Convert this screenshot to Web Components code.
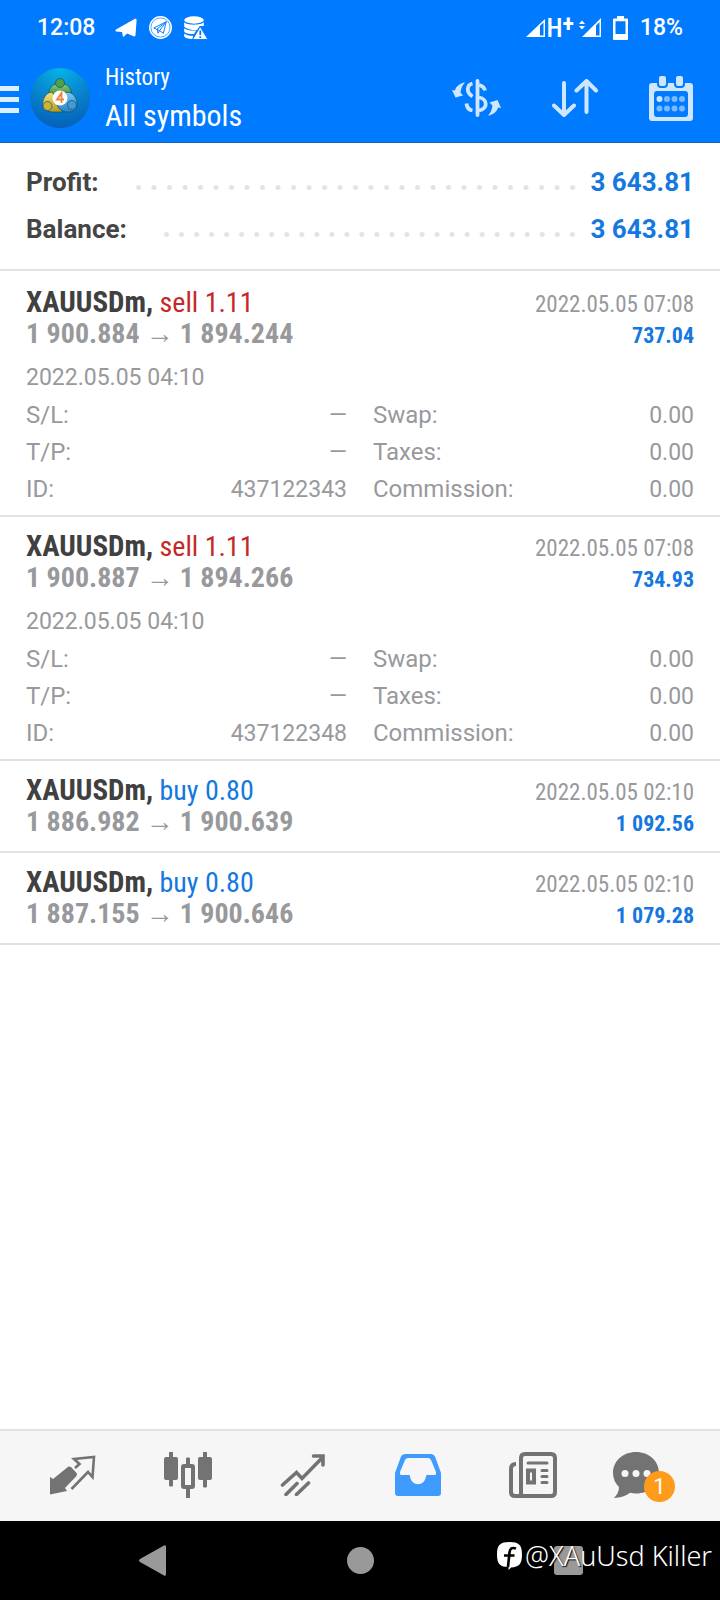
<!DOCTYPE html>
<html lang="en">
<head>
<meta charset="utf-8">
<meta name="viewport" content="width=device-width, initial-scale=1">
<title>History – All symbols</title>
<style>
  html, body { margin: 0; }
  body { background: #fff; font-family: Roboto, "Liberation Sans", sans-serif; }
</style>
</head>
<body>
<history-app></history-app>

<script>
const define = (name, html, setup) => {
  const template = document.createElement('template');
  template.innerHTML = html;
  customElements.define(name, class extends HTMLElement {
    constructor() {
      super();
      this.attachShadow({ mode: 'open' }).append(template.content.cloneNode(true));
    }
    connectedCallback() {
      if (setup) setup(this, this.shadowRoot);
    }
  });
};

const CONDENSED = '"Roboto Condensed", Roboto, "Liberation Sans Narrow", sans-serif';

define('status-bar', `
<style>
  :host { box-sizing: border-box; display: flex; align-items: center; height: 54px; padding: 1px 37px 0; color: #fff; font-size: 23px; font-weight: 500; line-height: 28px; }
  .left, .right { display: flex; align-items: center; }
  .left { gap: 12px; flex: 1; }
  .left time { margin-right: 8px; }
  .right { gap: 12px; }
  .net { display: flex; align-items: center; font-family: ${CONDENSED}; font-size: 26px; font-weight: 500; }
  .net span { margin-left: 1px; }
  .net sup { line-height: 0; font-size: 24px; vertical-align: 5px; font-weight: 700; }
  .net span + svg { margin-left: 5px; }
  svg { display: block; }
</style>
<div class="left">
  <time>12:08</time>
  <svg width="22" height="20" viewBox="0 0 22 20" fill="#fff"><path d="M.5 13Q0 12 1 11.500L20 .8q1.800-.5 1.600 1.400L20.500 17q-.2 2-2 1.300L12 15.500 9 18.500q-1 .7-1.200-.5L7 14 1 13.500zM8.500 13.200 17 6 9.800 14.200z"/></svg>
  <svg width="23" height="23" viewBox="0 0 24 24"><circle cx="12" cy="12" r="11.200" fill="#fff" stroke="#fff" stroke-width="1.500"/><circle cx="12" cy="12" r="10" fill="none" stroke="#007aff" stroke-width=".7"/><path d="M5 12.500 18 6 15 18 11 15.300zM8.500 13.500 18 6M18 6 11 15.300 9.500 18 8.500 13.500" fill="none" stroke="#007aff" stroke-width="1" stroke-linejoin="round"/></svg>
  <svg width="24" height="24" viewBox="0 0 24 24" fill="#fff"><ellipse cx="10" cy="4" rx="9.800" ry="3.700"/><path d="M.2 6.300c2.500 3.200 17 3.200 19.600 0v3.700L16 10 13 14C8 14.500 2 13 .2 10.500zM.2 12.300c2.500 2 7 2.600 12 2.200L10 18C5 18 1.500 17.500.2 15.500zM.2 17.500c2 1.800 5 2.300 9 2.300L8.500 23C4 23 1 22 .2 20.500z"/><path d="M16.200 10.500 24 23.600H8.500z" stroke="#007aff" stroke-width="1"/><path d="M15.400 14.500h1.800v4.500h-1.800zM15.400 20.300h1.800v1.800h-1.800z" fill="#007aff"/></svg>
</div>
<div class="right">
  <div class="net">
    <svg width="19" height="18" viewBox="0 0 19 18" fill="#fff"><path fill-rule="evenodd" d="M0 18 19 0v18zM14 6.800V16.500h3.500V3.500z"/></svg>
    <span>H<sup>+</sup></span>
    <svg width="22" height="19" viewBox="0 0 22 19" fill="#fff"><path d="M0 6 3 2.500 6 6zM0 8h6L3 11.500z"/><path fill-rule="evenodd" d="M3 19 22 0v19zM17 7.500V17.500h3.500V4z"/></svg>
  </div>
  <svg width="15" height="24" viewBox="0 0 15 24"><path fill="#fff" fill-rule="evenodd" d="M4 0h7v2.500h3q1 0 1 1V23q0 1-1 1H1q-1 0-1-1V3.500q0-1 1-1h3zM2.500 5.200V18h10V5.200z"/></svg>
  <span>18%</span>
</div>`);

define('app-header', `
<style>
  :host { display: block; background: #007aff; border-bottom: 1px solid #1763b8; color: #fff; }
  .bar { display: flex; align-items: center; height: 88px; padding-right: 27px; }
  button { all: unset; display: block; cursor: pointer; }
  svg { display: block; }
  .menu { width: 19px; margin-right: 11px; padding-top: 4px; }
  .title { flex: 1; padding: 4px 0 0 15px; font-family: ${CONDENSED}; }
  .title p, .title h1 { margin: 0; font-weight: 400; }
  .title p { font-size: 23px; line-height: 32px; }
  .title h1 { font-size: 30px; line-height: 44px; }
  .actions { display: flex; align-items: center; gap: 51px; }
</style>
<status-bar></status-bar>
<div class="bar">
  <button class="menu" aria-label="Menu"><svg width="19" height="28" viewBox="0 0 19 28" fill="#dcefff"><path d="M0 0h19v5H0zM0 11h19v5H0zM0 22h19v5H0z"/></svg></button>
  <svg width="60" height="60" viewBox="0 0 60 60">
    <defs>
      <radialGradient id="sky" cx=".5" cy="0" r="1"><stop offset="0" stop-color="#05b5e6"/><stop offset=".5" stop-color="#0887d0"/><stop offset="1" stop-color="#0660b8"/></radialGradient>
      <linearGradient id="g" x2="0" y2="1"><stop offset="0" stop-color="#8fca77"/><stop offset="1" stop-color="#2f8a3a"/></linearGradient>
      <linearGradient id="y" x2="0" y2="1"><stop offset="0" stop-color="#f2e37a"/><stop offset="1" stop-color="#b89a1c"/></linearGradient>
      <linearGradient id="b" x2="0" y2="1"><stop offset="0" stop-color="#7cc8f2"/><stop offset="1" stop-color="#2782c8"/></linearGradient>
    </defs>
    <circle cx="30" cy="30" r="30" fill="url(#sky)"/>
    <g stroke="#12506e" stroke-width=".7">
      <path d="M18.500 27q0-11.500 11.500-11.500T41.500 27q-3 2-7 1h-9q-4 3-7-1z" fill="url(#g)"/>
      <circle cx="30" cy="15" r="4.500" fill="#4fa04a"/>
      <path d="M22 24q-8 1-9.500 11-.5 8 9.500 9h11q-5-4-6-12z" fill="url(#y)"/>
      <circle cx="17.500" cy="38" r="4.500" fill="#cbb236"/>
      <path d="M36 24q9 0 11 10 1 9-7 10-10 1-13-7l6-2z" fill="url(#b)"/>
      <circle cx="42" cy="37" r="4.500" fill="#4199d6"/>
    </g>
    <circle cx="30" cy="30" r="7.500" fill="#fff"/>
    <path d="M31.500 35V25L27 31.500h7" fill="none" stroke="#f0843c" stroke-width="1.800"/>
  </svg>
  <div class="title"><p>History</p><h1>All symbols</h1></div>
  <div class="actions">
    <button aria-label="Symbols"><svg width="49" height="40" viewBox="0 0 49 40" fill="none" stroke="#cfe6ff" stroke-width="3.800">
      <path d="M25.500 3v34" stroke-linecap="round"/><path d="M20.500 5.500C14.500 7 14 14.500 20.500 18.500M14.500 25.500q.5 6 6 7M27 7c4 1 5.500 3 6 5.500M27 19.500C36 21 36 31 27 32.500"/>
      <g fill="#cfe6ff" stroke="none"><path d="M13 4.500C8 5 3.500 9 3 12.500L0 12l3.500 7.500L11 17.500 8.500 14.500C9 10 10.500 7 13 4.500z"/><path d="M36 37.500C41 37 45.500 33 46 29.500L49 30 45.500 22 37.500 24.500 40.500 27.500C40 32 38.500 35 36 37.500z"/></g></svg></button>
    <button aria-label="Sort"><svg width="46" height="40" viewBox="0 0 46 40" fill="none" stroke="#cfe6ff" stroke-width="4" stroke-linecap="round" stroke-linejoin="round"><path d="M12 5v32M2 27.500 12 37 22 27.500M34.500 34V3M24.500 12.500 34.500 3 44 12.500"/></svg></button>
    <button aria-label="Period"><svg width="44" height="46" viewBox="0 0 44 46"><path fill="#cfe6ff" fill-rule="evenodd" d="M3 8h38q3 0 3 3v32q0 3-3 3H3q-3 0-3-3V11q0-3 3-3zM8 16q-3 0-3 3v20q0 3 3 3h28q3 0 3-3V19q0-3-3-3z"/><g fill="#cfe6ff" stroke="#007aff" stroke-width="2"><rect x="9" y="0" width="9" height="12" rx="3"/><rect x="26" y="0" width="9" height="12" rx="3"/></g><circle cx="10.500" cy="24" r="3" fill="#cfe6ff"/><g fill="#7bb9ff"><circle cx="18" cy="24" r="3"/><circle cx="25.500" cy="24" r="3"/><circle cx="33" cy="24" r="3"/><circle cx="10.500" cy="33.500" r="3"/><circle cx="18" cy="33.500" r="3"/><circle cx="25.500" cy="33.500" r="3"/><circle cx="33" cy="33.500" r="3"/></g></svg></button>
  </div>
</div>`);

define('summary-line', `
<style>
  :host { display: flex; align-items: center; font-size: 26px; line-height: 47px; font-weight: 700; color: #454545; }
  i { flex: 1; height: 5px; margin: 10px 10px 0 32px; background: radial-gradient(circle at center, #e3e3e3 2px, transparent 3px) 0 0 / 15px 5px space no-repeat; }
  .value { color: #1478e0; }
</style>
<slot></slot><i></i><span class="value"><slot name="value"></slot></span>`);

define('deal-row', `
<style>
  :host { display: block; padding: 13px 26px 0; border-bottom: 2px solid #e3e3e3; color: #98999c; }
  .line { display: flex; align-items: baseline; justify-content: space-between; height: 32px; font-family: ${CONDENSED}; font-size: 28px; line-height: 32px; }
  .head { padding-bottom: 13px; }
  b { color: #404040; font-size: 29px; }
  .side { color: #c62828; }
  :host([side="buy"]) .side { color: #1478e0; }
  .price { font-weight: 700; }
  .arrow { font-family: "Liberation Sans", sans-serif; font-size: 28px; font-weight: 400; line-height: 0; padding: 0 6px; }
  .date, .profit { line-height: 28px; }
  .date { font-size: 23px; }
  .profit { font-size: 22px; font-weight: 700; color: #1478e0; }
  .details { display: none; font-size: 23px; line-height: 38px; padding-bottom: 7px; }
  :host([open]) .head { padding-bottom: 9px; }
  :host([open]) .details { display: block; }
  .opened { display: block; }
  dl { display: grid; grid-template-columns: 1fr 1fr; column-gap: 26px; margin: 0; line-height: 37px; }
  dl div { display: flex; align-items: baseline; justify-content: space-between; height: 37px; }
  dt { font-size: 24px; }
  dd { margin: 0; }
</style>
<div class="head">
  <div class="line"><span><b class="symbol"></b> <span class="side"></span></span><time class="date"></time></div>
  <div class="line"><span class="price"><span class="from"></span><span class="arrow">→</span><span class="to"></span></span><span class="profit"></span></div>
</div>
<div class="details">
  <time class="opened"></time>
  <dl>
    <div><dt>S/L:</dt><dd>—</dd></div><div><dt>Swap:</dt><dd>0.00</dd></div>
    <div><dt>T/P:</dt><dd>—</dd></div><div><dt>Taxes:</dt><dd>0.00</dd></div>
    <div><dt>ID:</dt><dd class="ticket"></dd></div><div><dt>Commission:</dt><dd>0.00</dd></div>
  </dl>
</div>`, (el, root) => {
  const put = (cls, text) => { root.querySelector('.' + cls).textContent = text || ''; };
  put('symbol', el.getAttribute('symbol') + ',');
  put('side', el.getAttribute('side') + ' ' + el.getAttribute('volume'));
  for (const key of ['date', 'from', 'to', 'profit', 'opened', 'ticket']) put(key, el.getAttribute(key));
});

define('tab-bar', `
<style>
  :host { display: block; background: #f6f6f6; border-top: 2px solid #e3e3e3; }
  nav { box-sizing: border-box; display: grid; grid-template-columns: repeat(6, 1fr); padding: 0 15px 2px; height: 90px; }
  button { all: unset; display: flex; align-items: center; justify-content: center; cursor: pointer; }
  svg { display: block; }
  .chat { position: relative; width: 69px; display: flex; }
  .badge { position: absolute; left: 31px; top: 19px; width: 31px; height: 31px; border-radius: 50%; background: #ff9b1a; color: #fff; font-size: 22px; font-weight: 400; line-height: 32px; text-align: center; }
</style>
<nav>
  <button aria-label="Quotes"><svg width="46" height="40" viewBox="0 0 46 40"><path fill="#737373" d="M0 22 3 24 5.500 22 18.500 11.500 21 12 27 18.500 26.500 21 15 33 17 36 0 39.500z"/><path d="M25 13 29.500 9 24 4 44 2 42.500 22 38 17 21.500 34" fill="none" stroke="#737373" stroke-width="2.600"/></svg></button>
  <button aria-label="Charts"><svg width="48" height="46" viewBox="0 0 48 46" fill="#737373"><path d="M5.500 0h3v5H5.500zM5.500 27h3v7H5.500zM39.500 0h3v5h-3zM39.500 27h3v8h-3z" stroke="#737373" stroke-linejoin="round"/><rect y="5" width="14" height="23" rx="2"/><rect x="34" y="5" width="14" height="23" rx="2"/><path d="M22.500 6h3v7h-3zM22.500 36h3v10h-3z" stroke="#737373" stroke-linejoin="round"/><rect x="19" y="14" width="10" height="21" rx="1" fill="#f6f6f6" stroke="#737373" stroke-width="4"/></svg></button>
  <button aria-label="Trade"><svg width="46" height="42" viewBox="0 0 46 42" fill="none" stroke="#737373" stroke-width="3.600"><path d="M2.500 31 16.500 18.500 22 24.500 42.500 3.500M33.500 2H43V11M6 40.500 17 29.500M16.500 40.500 28.500 29" stroke-linecap="round"/></svg></button>
  <button aria-label="History"><svg width="46" height="42" viewBox="0 0 46 42"><path fill="#409bff" fill-rule="evenodd" d="M10 0h26q3 0 4 2.500L46 19v20q0 3-3 3H3q-3 0-3-3V19L6 2.500Q7 0 10 0zM13 4q-2 0-3 2L5 18v1.500q0 1.500 1.500 1.500H14q1 0 1 1c1 11 15 11 16 0q0-1 1-1h7.500q1.500 0 1.500-1.500V18L36 6q-1-2-3-2z"/></svg></button>
  <button aria-label="News"><svg width="48" height="46" viewBox="0 0 48 46" fill="none" stroke="#737373" stroke-width="4"><path d="M7 12Q2 12 2 17V40q0 4 4 4H42q4 0 4-4V6q0-4-4-4H16q-4 0-4 4V44" stroke-linejoin="round"/><path d="M19 11H38M33 18.500h5M33 24.500h5M33 30.500h5" stroke-width="3" stroke-linecap="round"/><rect x="19" y="18.500" width="6" height="12"/></svg></button>
  <button aria-label="Messages, 1 new"><span class="chat"><svg width="46" height="46" viewBox="0 0 46 46"><path fill="#737373" d="M23 0C36 0 46 9 46 21S36 41.500 23 41.500q-3 0-6-.8Q11 45.500 1 46q5-5 5-11Q0 29 0 21C0 9 10 0 23 0z"/><g fill="#f6f6f6"><circle cx="12" cy="21.500" r="3.500"/><circle cx="23" cy="21.500" r="3.500"/><circle cx="34" cy="21.500" r="3.500"/></g></svg><span class="badge">1</span></span></button>
</nav>`);

define('system-nav', `
<style>
  :host { display: block; position: relative; background: #000; }
  nav { display: grid; grid-template-columns: repeat(3, 1fr); padding: 0 48px; height: 79px; }
  button { all: unset; display: flex; align-items: center; justify-content: center; cursor: pointer; }
  .mark { position: absolute; right: 8px; top: 17px; display: flex; align-items: center; gap: 3px; color: #fff; font: 300 27px/36px "Noto Sans", sans-serif; text-shadow: 1px 1px 1px #000; }
</style>
<nav>
  <button aria-label="Back"><svg width="27" height="31" viewBox="0 0 27 31"><path fill="#999" d="M25 .5q2-1 2 1.500v27q0 2.500-2 1.500L1 17q-2-1.500 0-3z"/></svg></button>
  <button aria-label="Home"><svg width="27" height="27" viewBox="0 0 27 27"><circle cx="13.500" cy="13.500" r="13.500" fill="#999"/></svg></button>
  <button aria-label="Recent apps"><svg width="29" height="29" viewBox="0 0 29 29"><rect width="29" height="29" rx="3" fill="#999"/></svg></button>
</nav>
<div class="mark"><svg width="25" height="28" viewBox="0 0 25 28"><path fill="#fff" d="M12.500 0C22 0 25 3 25 12.500S22 25 14 25.500L11.500 28V25C3 25 0 22 0 12.500S3 0 12.500 0z"/><path d="M19 6.500c-4-1.500-6 0-6.500 4L11 25M7 13.500h10.500" fill="none" stroke="#000" stroke-width="2.600"/></svg><span>@XAuUsd Killer</span></div>`);

define('history-app', `
<style>
  :host { display: flex; flex-direction: column; min-height: 100vh; }
  .summary { padding: 16px 26px; border-bottom: 2px solid #e3e3e3; }
  main { flex: 1; }
  .deals { padding-top: 2px; }
</style>
<app-header></app-header>
<main>
  <section class="summary">
    <summary-line>Profit:<span slot="value">3 643.81</span></summary-line>
    <summary-line>Balance:<span slot="value">3 643.81</span></summary-line>
  </section>
  <section class="deals">
    <deal-row open symbol="XAUUSDm" side="sell" volume="1.11" date="2022.05.05 07:08" from="1 900.884" to="1 894.244" profit="737.04" opened="2022.05.05 04:10" ticket="437122343"></deal-row>
    <deal-row open symbol="XAUUSDm" side="sell" volume="1.11" date="2022.05.05 07:08" from="1 900.887" to="1 894.266" profit="734.93" opened="2022.05.05 04:10" ticket="437122348"></deal-row>
    <deal-row symbol="XAUUSDm" side="buy" volume="0.80" date="2022.05.05 02:10" from="1 886.982" to="1 900.639" profit="1 092.56"></deal-row>
    <deal-row symbol="XAUUSDm" side="buy" volume="0.80" date="2022.05.05 02:10" from="1 887.155" to="1 900.646" profit="1 079.28"></deal-row>
  </section>
</main>
<tab-bar></tab-bar>
<system-nav></system-nav>`);
</script>
</body>
</html>
